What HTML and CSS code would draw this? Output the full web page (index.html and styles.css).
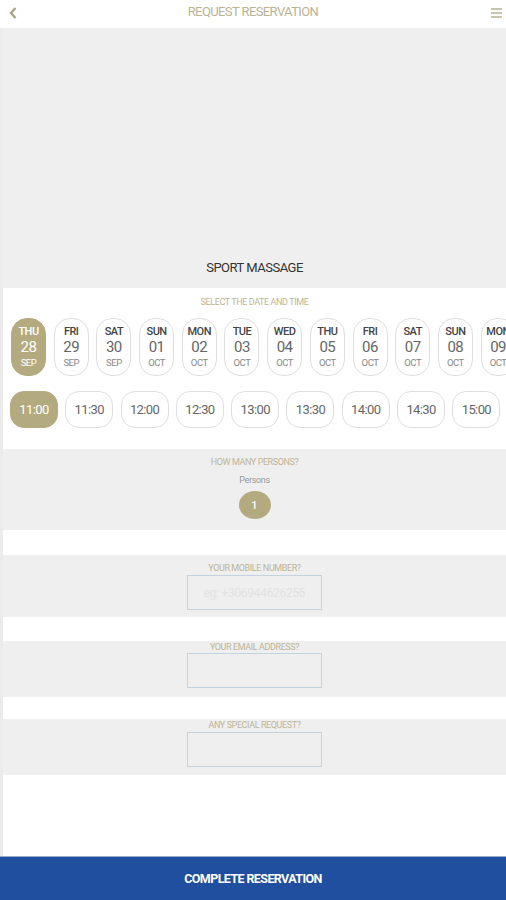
FILE: index.html
```html
<!DOCTYPE html>
<html>
<head>
<meta charset="utf-8">
<link rel="stylesheet" href="styles.css">
</head>
<body>
<div class="app">
  <header class="topbar">
    <svg class="back" width="10" height="14" viewBox="0 0 10 14"><path d="M7.5 2 L3 7 L7.5 12" fill="none" stroke="#aaa384" stroke-width="2.4"/></svg>
    <div class="title">REQUEST RESERVATION</div>
    <svg class="menu" width="11" height="12" viewBox="0 0 11 12"><rect x="0" y="1" width="11" height="2" fill="#c9c4b0"/><rect x="0" y="5" width="11" height="2" fill="#c9c4b0"/><rect x="0" y="9" width="11" height="2" fill="#c9c4b0"/></svg>
  </header>
  <main class="content">
    <section class="hero">
      <div class="hero-title">SPORT MASSAGE</div>
    </section>
    <section class="picker">
      <div class="label">SELECT THE DATE AND TIME</div>
      <div class="dates">
        <div class="date sel"><span class="dw">THU</span><span class="dn">28</span><span class="dm">SEP</span></div>
        <div class="date"><span class="dw">FRI</span><span class="dn">29</span><span class="dm">SEP</span></div>
        <div class="date"><span class="dw">SAT</span><span class="dn">30</span><span class="dm">SEP</span></div>
        <div class="date"><span class="dw">SUN</span><span class="dn">01</span><span class="dm">OCT</span></div>
        <div class="date"><span class="dw">MON</span><span class="dn">02</span><span class="dm">OCT</span></div>
        <div class="date"><span class="dw">TUE</span><span class="dn">03</span><span class="dm">OCT</span></div>
        <div class="date"><span class="dw">WED</span><span class="dn">04</span><span class="dm">OCT</span></div>
        <div class="date"><span class="dw">THU</span><span class="dn">05</span><span class="dm">OCT</span></div>
        <div class="date"><span class="dw">FRI</span><span class="dn">06</span><span class="dm">OCT</span></div>
        <div class="date"><span class="dw">SAT</span><span class="dn">07</span><span class="dm">OCT</span></div>
        <div class="date"><span class="dw">SUN</span><span class="dn">08</span><span class="dm">OCT</span></div>
        <div class="date"><span class="dw">MON</span><span class="dn">09</span><span class="dm">OCT</span></div>
      </div>
      <div class="times">
        <div class="time sel">11:00</div>
        <div class="time">11:30</div>
        <div class="time">12:00</div>
        <div class="time">12:30</div>
        <div class="time">13:00</div>
        <div class="time">13:30</div>
        <div class="time">14:00</div>
        <div class="time">14:30</div>
        <div class="time">15:00</div>
      </div>
    </section>
    <section class="persons">
      <div class="label">HOW MANY PERSONS?</div>
      <div class="sub">Persons</div>
      <div class="count">1</div>
    </section>
    <section class="field f1">
      <div class="label">YOUR MOBILE NUMBER?</div>
      <div class="input"><span class="ph">eg: +306944626255</span></div>
    </section>
    <section class="field f2">
      <div class="label">YOUR EMAIL ADDRESS?</div>
      <div class="input"></div>
    </section>
    <section class="field f3">
      <div class="label">ANY SPECIAL REQUEST?</div>
      <div class="input"></div>
    </section>
  </main>
  <footer class="cta">COMPLETE RESERVATION</footer>
</div>
</body>
</html>
```
FILE: styles.css
```css
* { box-sizing: border-box; }
html, body { margin: 0; padding: 0; }
body {
  width: 506px;
  height: 900px;
  overflow: hidden;
  background: #fff;
  font-family: Roboto, "Liberation Sans", sans-serif;
}
.app {
  display: flex;
  flex-direction: column;
  height: 900px;
}
.topbar {
  height: 28px;
  display: flex;
  align-items: center;
  justify-content: space-between;
  padding: 0 4px 0 8px;
  background: #fff;
  position: relative;
}
.back { margin-top: -2px; }
.menu { margin-top: -2px; }
.title {
  position: absolute;
  left: 0;
  right: 0;
  top: 4px;
  text-align: center;
  font-size: 13px;
  letter-spacing: -0.6px;
  color: #bab396;
  pointer-events: none;
}
.content {
  flex: 1;
  display: flex;
  flex-direction: column;
  border-left: 3px solid #ebebeb;
  overflow: hidden;
}
.hero {
  height: 260px;
  background: #efefef;
  display: flex;
  align-items: flex-end;
  justify-content: center;
  padding-bottom: 13px;
}
.hero-title {
  font-size: 13px;
  letter-spacing: -0.5px;
  color: #333;
}
.label {
  font-size: 9px;
  letter-spacing: -0.4px;
  color: #bdb596;
  text-align: center;
}
.picker {
  background: #fff;
  padding-top: 9px;
  height: 161px;
}
.dates {
  display: flex;
  gap: 7.7px;
  margin-top: 11px;
  padding-left: 8px;
  overflow: hidden;
}
.date {
  flex: 0 0 35px;
  height: 58px;
  border: 1px solid #dedede;
  border-radius: 16px;
  display: flex;
  flex-direction: column;
  align-items: center;
  justify-content: center;
  color: #555;
  letter-spacing: -0.5px;
}
.date .dw { font-size: 11px; line-height: 13px; font-weight: 500; color: #444; }
.date .dn { font-size: 15px; line-height: 18px; color: #666; }
.date .dm { font-size: 9.5px; line-height: 13px; color: #888; }
.date.sel { background: #b3aa80; border-color: #b3aa80; }
.date.sel span { color: #fff; }
.times {
  display: flex;
  gap: 7.3px;
  margin-top: 15px;
  padding-left: 7px;
  overflow: hidden;
}
.time {
  flex: 0 0 48px;
  height: 37px;
  border: 1px solid #dedede;
  border-radius: 14px;
  display: flex;
  align-items: center;
  justify-content: center;
  font-size: 13px;
  letter-spacing: -0.6px;
  color: #666;
}
.time.sel { background: #b3aa80; border-color: #b3aa80; color: #fff; }
.persons {
  height: 81px;
  background: #efefef;
  display: flex;
  flex-direction: column;
  align-items: center;
  padding-top: 8px;
}
.persons .sub {
  font-size: 9px;
  letter-spacing: -0.3px;
  color: #999;
  margin-top: 8px;
}
.count {
  width: 32px;
  height: 28px;
  border-radius: 50%;
  background: #b3aa80;
  color: #fff;
  font-size: 11px;
  font-weight: 500;
  display: flex;
  align-items: center;
  justify-content: center;
  margin-top: 6px;
}
.field {
  background: #efefef;
  display: flex;
  flex-direction: column;
  align-items: center;
}
.field .input {
  width: 135px;
  border: 1px solid #c4d3e0;
  display: flex;
  align-items: center;
  justify-content: center;
}
.f1 { margin-top: 25px; height: 62px; padding-top: 8px; }
.f1 .input { height: 35px; margin-top: 2px; }
.f2 { margin-top: 24px; height: 56px; padding-top: 1px; }
.f2 .input { height: 35px; margin-top: 1px; }
.f3 { margin-top: 22px; height: 56px; padding-top: 1px; }
.f3 .input { height: 35px; margin-top: 2px; }
.ph {
  font-size: 12px;
  letter-spacing: -0.3px;
  color: #e2e2e2;
}
.cta {
  height: 44px;
  flex: 0 0 44px;
  background: #1f4f9e;
  color: #fff;
  display: flex;
  align-items: center;
  justify-content: center;
  font-size: 12.5px;
  font-weight: 700;
  letter-spacing: -0.6px;
  border-top: 1px solid #9aa9c4;
}
```
